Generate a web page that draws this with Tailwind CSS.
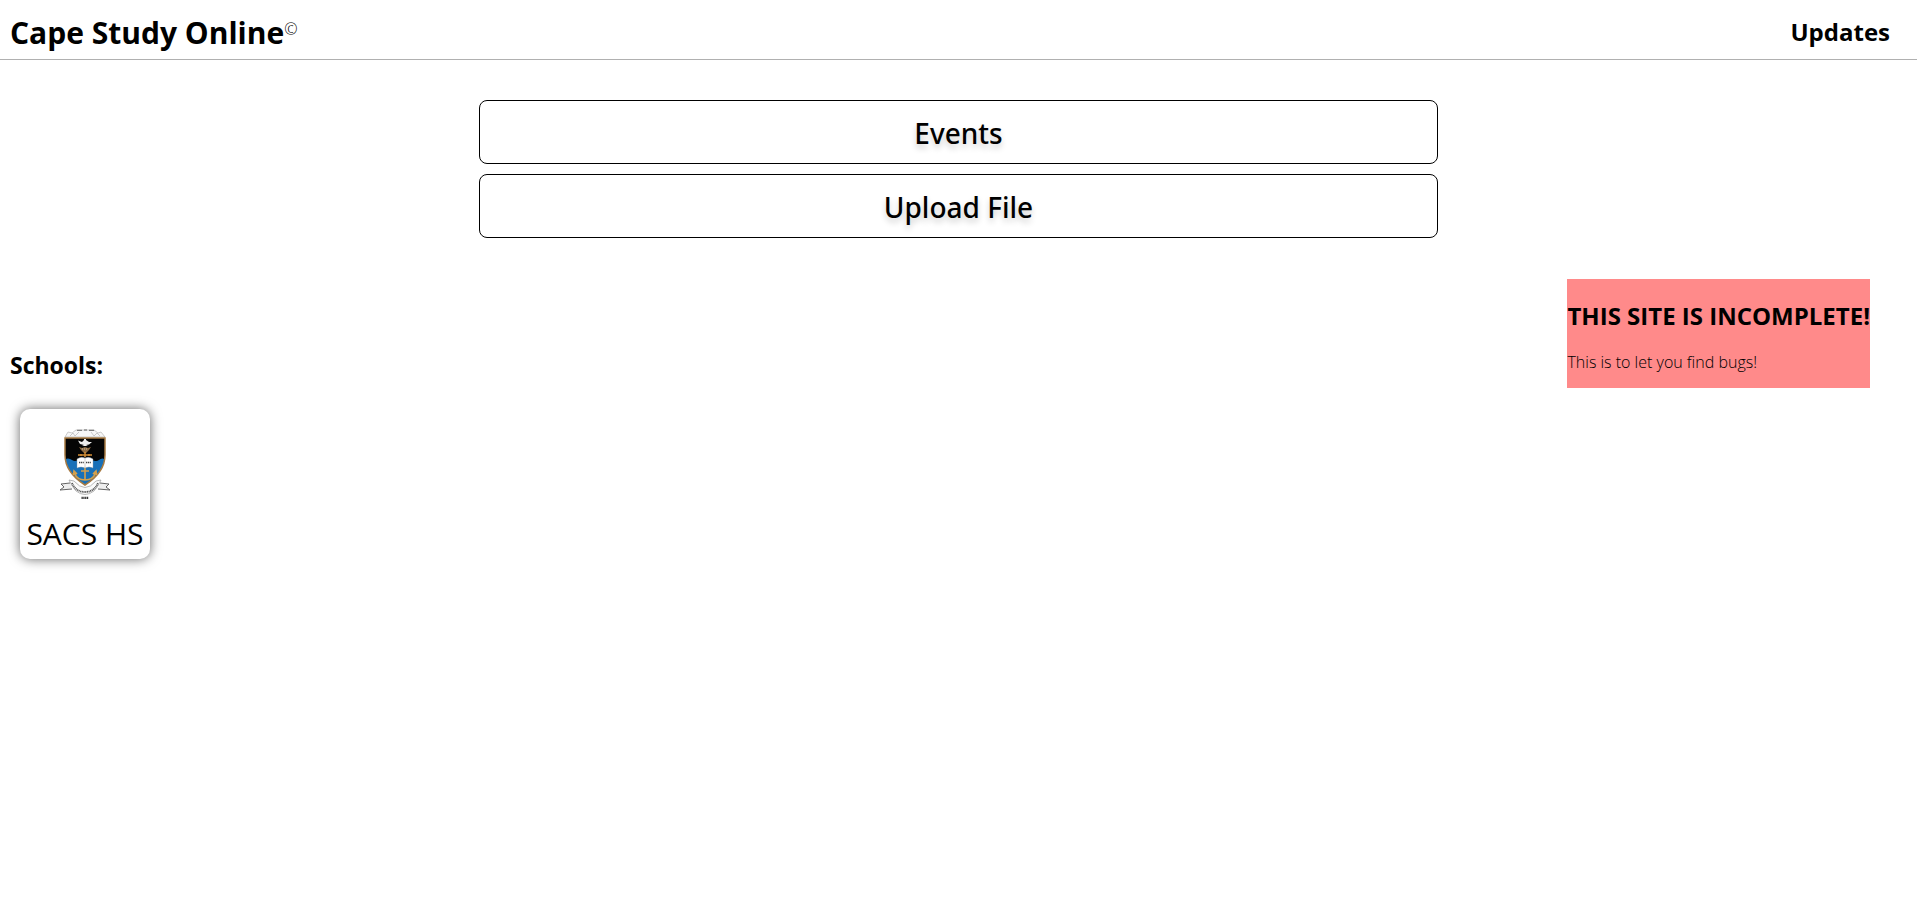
<!DOCTYPE html>
<html lang="en">
<head>
<meta charset="utf-8">
<meta name="viewport" content="width=device-width, initial-scale=1">
<title>Cape Study Online</title>
<script src="https://cdn.jsdelivr.net/npm/@tailwindcss/browser@4"></script>
</head>
<body class="min-h-screen bg-white text-black font-['Open_Sans','Noto_Sans',sans-serif]">
<header class="flex h-[60px] items-center justify-between border-b border-[#b0b0b0] pt-1 pl-2.5 pr-[27px]">
  <h1 class="flex items-start pt-0.5 text-[30px] leading-10 font-bold">Cape Study Online<sup class="top-0 pt-2 text-base leading-4 font-light">©</sup></h1>
  <a href="#updates" class="text-2xl font-bold">Updates</a>
</header>
<main>
  <nav class="mx-auto mt-10 flex w-1/2 flex-col gap-2.5 font-['Noto_Sans','Open_Sans',sans-serif]">
    <button type="button" class="h-16 rounded-lg border border-black pt-0.5 text-[28px] font-medium text-shadow-[0_4px_6px_rgb(0_0_0/0.2)]">Events</button>
    <button type="button" class="h-16 rounded-lg border border-black pt-0.5 text-[28px] font-medium text-shadow-[0_4px_6px_rgb(0_0_0/0.2)]">Upload File</button>
  </nav>
  <div class="mt-[41px] flex items-start justify-between pl-2.5 pr-[47px]">
    <section class="pt-[70px]">
      <h2 class="text-[23px] leading-8 font-bold">Schools:</h2>
      <a href="#sacs" class="mt-[28px] ml-2.5 flex h-[150px] w-[130px] flex-col items-center justify-between rounded-[10px] bg-white pt-5 pb-1 shadow-[0_0_12px_rgb(0_0_0/0.6)]">
        <svg class="h-[72px] w-[50px]" viewBox="0 0 50 72" role="img" aria-label="SACS crest">
          <defs><clipPath id="shield"><path d="M5 9H45V26C45 39 36 49 25 56C14 49 5 39 5 26Z"/></clipPath></defs>
          <path d="M5 8L8 3L12 4L16 1H34L38 4L41 3L45 8Z" fill="#f7f7f7" stroke="#aaa" stroke-width=".6"/>
          <path d="M17 1.3H22M24 1H27M29 1.3H34" stroke="#444" stroke-width=".8"/>
          <path d="M10 7L13 4L15 7L19 3M31 3L34 7L37 4L40 7" fill="none" stroke="#aaa" stroke-width=".6"/>
          <g clip-path="url(#shield)">
            <path d="M0 0H50V34H0Z" fill="#050505"/>
            <path d="M4 31Q8 28 12 31Q15 33 18 31H32Q36 33 39 31Q42 28 46 31V60H4Z" fill="#1870b8"/>
          </g>
          <path d="M5 9H45V26C45 39 36 49 25 56C14 49 5 39 5 26Z" fill="none" stroke="#a77a42" stroke-width="1.5"/>
          <path d="M18 11.500L22 13L24 11V10H26V11L29 13H32L29 15.500L26 16L28 17H22L24 16L20 15Z" fill="#eee"/>
          <path d="M19 18L22 19L25 18L28 19L31 18L29 21L26 24H24L21 21Z" fill="#8e6c43"/>
          <path d="M22 20H28" stroke="#ddd" stroke-width=".7" stroke-dasharray="1 1"/>
          <path d="M18 26H32M25 23V28M21 25V27M29 25V27" stroke="#d28d36" stroke-width="1.5"/>
          <path d="M25 37V51M14.500 44Q17 51 25 51Q33 51 35.500 44M13.500 46L14 42L17 45M33 45L36 42L36.500 46M21 42H29" fill="none" stroke="#d6a04b" stroke-width="1.6"/>
          <path d="M17 30Q21 27 25 29Q29 27 33 30V39Q29 37 25 39Q21 37 17 39Z" fill="#fff" stroke="#8b98a5" stroke-width=".4"/>
          <path d="M25 29V39" stroke="#999" stroke-width=".5"/>
          <path d="M19 33.500H24M26 33.500H31" stroke="#444" stroke-width="1.600" stroke-dasharray="1.200 .6"/>
          <path d="M9 51L14 52Q25 65 36 52L41 51Q38 58 34 62Q25 69 16 62Q12 58 9 51Z" fill="#fafafa" stroke="#999" stroke-width=".7"/>
          <path d="M12 54Q16 63 25 63Q34 63 38 54" fill="none" stroke="#555" stroke-width="1.800" stroke-dasharray="1.100 .6"/>
          <path d="M10 54L1 55L4 58L0 61L12 60M40 54L49 55L46 58L50 61L38 60" fill="#eee" stroke="#555" stroke-width=".9"/>
          <path d="M21.500 68.800H28.500" stroke="#333" stroke-width="2.200" stroke-dasharray="1.300 .5"/>
        </svg>
        <span class="text-[30px] leading-[42px] whitespace-nowrap">SACS HS</span>
      </a>
    </section>
    <aside class="flex flex-col gap-4 bg-[#ff8a8a] pt-[19px] pb-3.5">
      <h2 class="text-2xl leading-9 font-bold whitespace-nowrap">THIS SITE IS INCOMPLETE!</h2>
      <p class="text-base leading-6 font-light">This is to let you find bugs!</p>
    </aside>
  </div>
</main>
</body>
</html>
